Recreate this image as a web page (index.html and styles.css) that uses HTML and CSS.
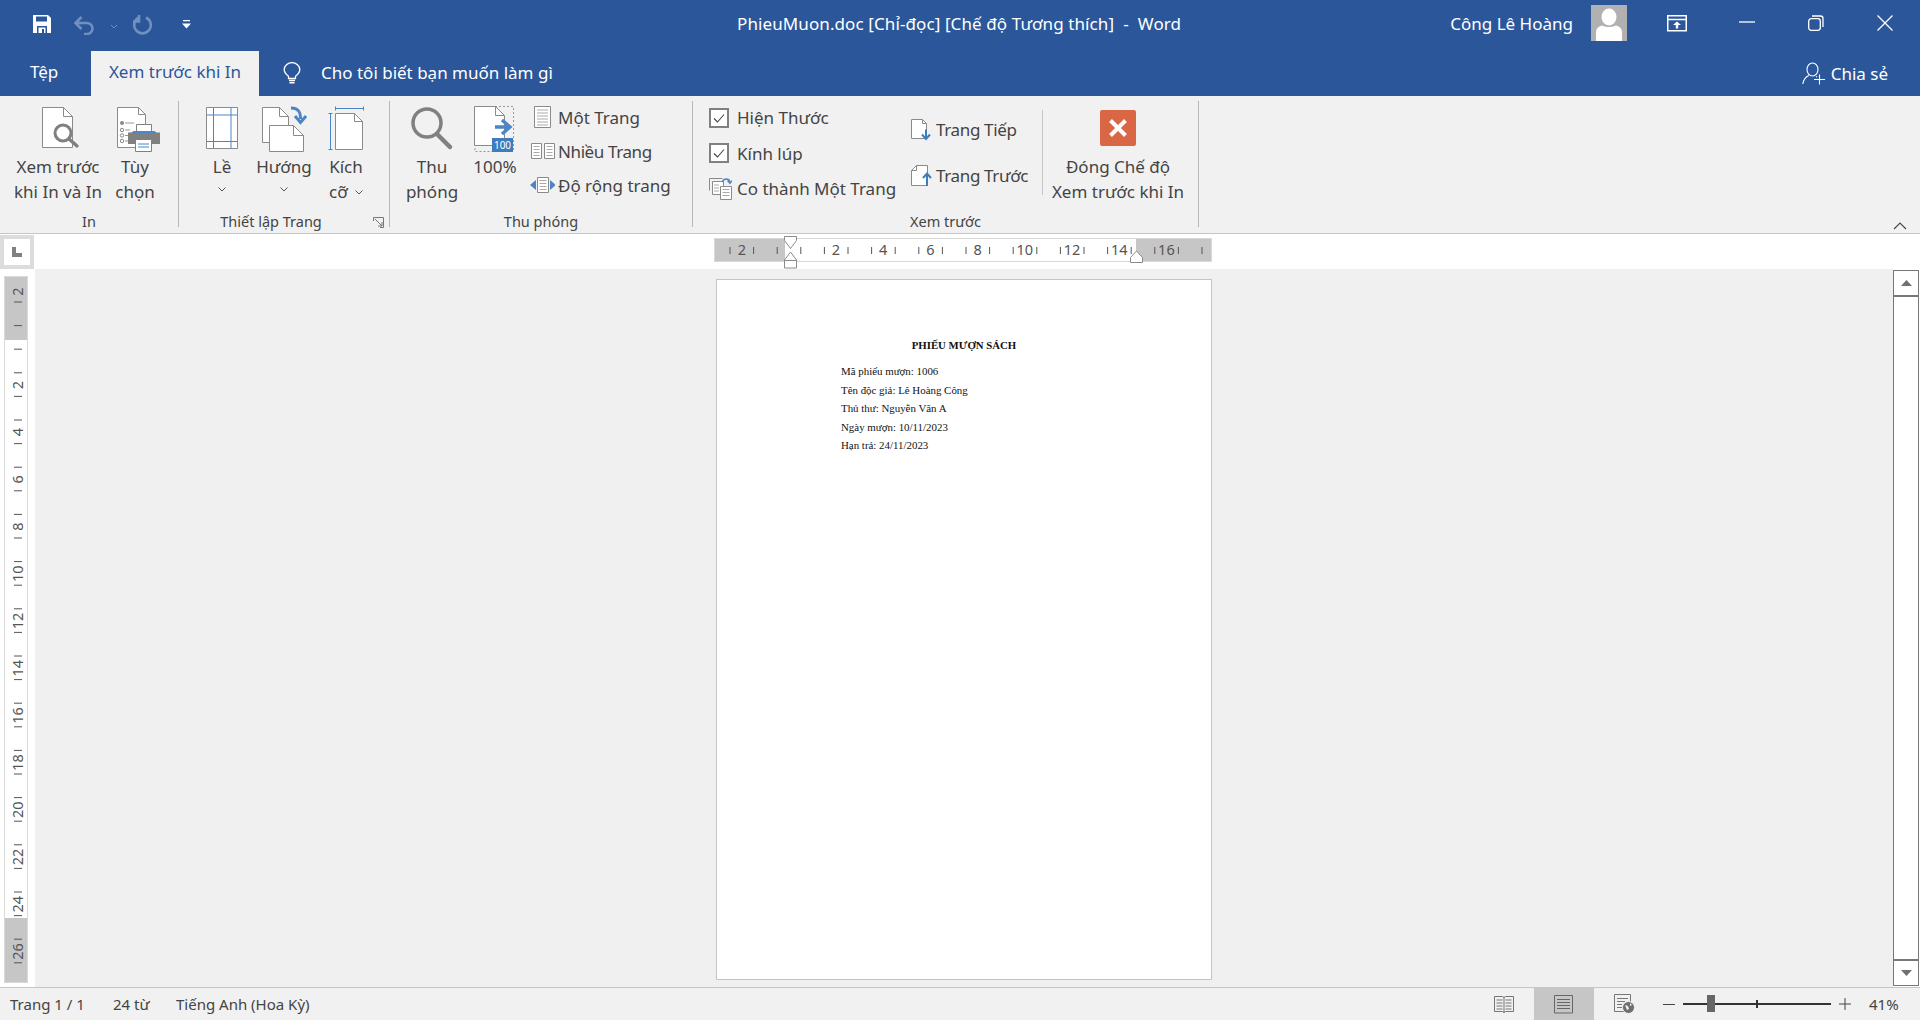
FILE: index.html
```html
<!DOCTYPE html>
<html lang="vi">
<head>
    <meta charset="UTF-8">
    <title>PhieuMuon.doc - Word</title>
    <link rel="stylesheet" href="styles.css">
</head>
<body>
    <div class="titlebar">
        <div class="qat">
            <svg class="qat-save" width="20" height="20" viewBox="0 0 20 20"><path d="M1 1h15l3 3v15H1z" fill="#fff"/><path d="M4 2.500h11v5H4z" fill="#2b579a"/><path d="M5 12h10v7H5z" fill="#2b579a"/><path d="M6.500 13.500h7V19h-7z" fill="#fff"/><path d="M10 15h2v4h-2z" fill="#2b579a"/></svg>
            <svg class="qat-undo" width="22" height="20" viewBox="0 0 22 20"><path d="M3 8h11a5.500 5.500 0 0 1 0 11h-3M8.500 2 2.500 8l6 6" fill="none" stroke="#6f90c0" stroke-width="2.600"/></svg>
            <svg class="qat-chev" width="8" height="5" viewBox="0 0 8 5"><path d="M1 1l3 3 3-3" fill="none" stroke="#6f90c0"/></svg>
            <svg class="qat-redo" width="21" height="21" viewBox="0 0 21 21"><path d="M14 3.500a8.300 8.300 0 1 1-7 0M7 1v6.500H1" fill="none" stroke="#6f90c0" stroke-width="2.600"/></svg>
            <svg class="qat-more" width="9" height="9" viewBox="0 0 9 9"><path d="M1 0h7v1.200H1zM0 3.500h9L4.500 8.500z" fill="#fff"/></svg>
        </div>
        <div class="doc-title">PhieuMuon.doc [Chỉ-đọc] [Chế độ Tương thích]&nbsp; -&nbsp; Word</div>
        <div class="win-area">
            <span class="user-name">Công Lê Hoàng</span>
            <svg class="avatar" width="36" height="36" viewBox="0 0 36 36"><rect width="36" height="36" fill="#b1b1b1"/><ellipse cx="18" cy="12" rx="7.500" ry="8.500" fill="#fff"/><path d="M5 36v-9q0-5 6-6.500 7 3 14 0 6 1.500 6 6.500v9z" fill="#fff"/></svg>
            <svg class="win-display" width="20" height="17" viewBox="0 0 20 17"><path d="M.750.750h18.500v15H.750zM1 4.500h18" fill="none" stroke="#fff" stroke-width="1.500"/><path d="M10 6.500l4 3.500h-2.800v3.500H8.800V10H6z" fill="#fff"/></svg>
            <svg class="win-min" width="16" height="2" viewBox="0 0 16 2"><path d="M0 1h16" stroke="#fff" stroke-width="1.300"/></svg>
            <svg class="win-restore" width="16" height="16" viewBox="0 0 16 16"><rect x=".7" y="3.700" width="11.600" height="11.600" rx="2.500" fill="none" stroke="#fff" stroke-width="1.300"/><path d="M4 1h8.500Q15 1 15 3.500V12" fill="none" stroke="#fff" stroke-width="1.300"/></svg>
            <svg class="win-close" width="16" height="16" viewBox="0 0 16 16"><path d="M.500.500l15 15M15.500.500l-15 15" stroke="#fff" stroke-width="1.300"/></svg>
        </div>
    </div>

    <div class="tabbar">
        <span class="tab tab-file">Tệp</span>
        <span class="tab tab-active">Xem trước khi In</span>
        <svg class="bulb" width="18" height="23" viewBox="0 0 18 23"><path d="M5.500 16.500v-2.200C3.500 12.800 1.200 11 1.200 7.600A7.800 7.000 0 0 1 16.800 7.600c0 3.400-2.300 5.200-4.300 6.700v2.200z" fill="none" stroke="#fff" stroke-width="1.300"/><path d="M6 18.500h6M6.500 20.800h5" stroke="#fff" stroke-width="1.500"/></svg>
        <span class="tell-me">Cho tôi biết bạn muốn làm gì</span>
        <span class="share">
            <svg width="23" height="23" viewBox="0 0 23 23"><ellipse cx="10.500" cy="7.500" rx="5.500" ry="6.500" fill="none" stroke="#fff" stroke-width="1.100"/><path d="M.800 22c1-5.500 3.500-7.500 6-8.500M14 14.500l1 .5" fill="none" stroke="#fff" stroke-width="1.100"/><path d="M17.500 12.500v10M12 17.500h11" stroke="#fff" stroke-width="1.100"/></svg>
            Chia sẻ
        </span>
    </div>

    <div class="ribbon">
        <div class="group group-print">
            <div class="group-body">
                <div class="big-btn w-preview">
                    <div class="big-icon icon-preview">
                        <svg width="44" height="44" viewBox="0 0 44 44"><path d="M2.500 1.500h21l9 9v31h-30z" fill="#fff" stroke="#8a8a8a"/><path d="M23.500 1.500v9h9" fill="none" stroke="#8a8a8a"/><circle cx="23" cy="27" r="8" fill="#fff" stroke="#808080" stroke-width="3"/><path d="M29 33l8 7" stroke="#808080" stroke-width="3.400" stroke-linecap="round"/></svg>
                    </div>
                    <div>Xem trước<br>khi In và In</div>
                </div>
                <div class="big-btn w-options">
                    <div class="big-icon icon-options">
                        <svg width="48" height="48" viewBox="0 0 48 48"><path d="M3.500 1.500h21l7 7v33h-28z" fill="#fff" stroke="#8a8a8a"/><path d="M24.500 1.500v7h7" fill="none" stroke="#8a8a8a"/><path d="M11 17h9M11 24h5M11 29.500h4M11 35h4" stroke="#999"/><circle cx="8" cy="17" r="2" fill="#888"/><circle cx="8" cy="24" r="1.700" fill="none" stroke="#888"/><circle cx="8" cy="29.500" r="1.700" fill="none" stroke="#888"/><circle cx="8" cy="35" r="1.700" fill="none" stroke="#888"/><path d="M22.500 18.500h15v9h-15z" fill="#fff" stroke="#808080"/><path d="M20 25h20l3 1.500h3v11.500h-32v-11.500h3z" fill="#808080"/><path d="M19 26.500h22" stroke="#4a86c5" stroke-width="2"/><path d="M21.500 33.500h16v12h-16z" fill="#fff" stroke="#808080"/><path d="M24 38h11M24 41h11" stroke="#4a86c5"/></svg>
                    </div>
                    <div>Tùy<br>chọn</div>
                </div>
            </div>
            <div class="group-label">In</div>
        </div>

        <div class="group group-setup">
            <div class="group-body">
                <div class="big-btn w-setup">
                    <div class="big-icon">
                        <svg width="34" height="44" viewBox="0 0 34 44"><path d="M1.500 1.500h31v41h-31z" fill="#fff" stroke="#8a8a8a"/><path d="M8.500 2v40M26 2v40M2 9h30M2 35.500h30" stroke="#4a86c5"/></svg>
                    </div>
                    <div>Lề</div>
                    <svg class="chev" width="8" height="5" viewBox="0 0 8 5"><path d="M.500.500L4 4 7.500.500" fill="none" stroke="#555"/></svg>
                </div>
                <div class="big-btn w-setup">
                    <div class="big-icon">
                        <svg width="46" height="46" viewBox="0 0 46 46"><path d="M1.500 1.500h17l9 9v26h-26z" fill="#fff" stroke="#8a8a8a"/><path d="M18.500 1.500v9h9" fill="none" stroke="#8a8a8a"/><path d="M8.500 19.500h24l10 10v16h-34z" fill="#fff" stroke="#8a8a8a"/><path d="M32.500 19.500v10h10" fill="none" stroke="#8a8a8a"/><path d="M30 2c7 0 10 4 9.500 11M34 10l5.500 6.500 5.500-6.500" fill="none" stroke="#4a86c5" stroke-width="3"/></svg>
                    </div>
                    <div>Hướng</div>
                    <svg class="chev" width="8" height="5" viewBox="0 0 8 5"><path d="M.500.500L4 4 7.500.500" fill="none" stroke="#555"/></svg>
                </div>
                <div class="big-btn w-setup">
                    <div class="big-icon">
                        <svg width="36" height="46" viewBox="0 0 36 46"><path d="M7.500 7.500h19l8 8v28h-27z" fill="#fff" stroke="#8a8a8a"/><path d="M26.500 7.500v8h8" fill="none" stroke="#8a8a8a"/><path d="M7.500.500v4M35.500.500v4M7.500 2.500h28M.500 7.500h4M.500 43.500h4M2.500 7.500v36" fill="none" stroke="#4a86c5"/></svg>
                    </div>
                    <div>Kích<br>cỡ <svg class="chev-inline" width="8" height="5" viewBox="0 0 8 5"><path d="M.500.500L4 4 7.500.500" fill="none" stroke="#555"/></svg></div>
                </div>
            </div>
            <div class="group-label label-launcher">
                Thiết lập Trang
                <svg class="launcher" width="11" height="11" viewBox="0 0 11 11"><path d="M.500 4V.500H10.500V10.500H7M2 2l7 7M5 9h4V5" fill="none" stroke="#777"/></svg>
            </div>
        </div>

        <div class="group group-zoom">
            <div class="group-body">
                <div class="big-btn w-zoom">
                    <div class="big-icon">
                        <svg width="44" height="46" viewBox="0 0 44 46"><circle cx="17" cy="17" r="14" fill="none" stroke="#808080" stroke-width="3.500"/><path d="M27 28l13 13" stroke="#808080" stroke-width="4.500" stroke-linecap="round"/></svg>
                    </div>
                    <div>Thu<br>phóng</div>
                </div>
                <div class="big-btn w-hundred">
                    <div class="big-icon">
                        <svg width="42" height="48" viewBox="0 0 42 48"><path d="M21 .500h18.500v45H26" fill="none" stroke="#999" stroke-dasharray="2 2"/><path d="M.500.500h21l9 9v30h-30z" fill="#fff" stroke="#8a8a8a"/><path d="M21.500.500v9h9" fill="none" stroke="#8a8a8a"/><path d="M1 42v3.500h18" fill="none" stroke="#999" stroke-dasharray="2 2"/><path d="M21 21h13M28 14l8 7-8 7" fill="none" stroke="#4a86c5" stroke-width="3.400"/><rect x="18" y="32" width="21" height="14" fill="#3f7cbc"/><text class="badge" x="28.500" y="42.500">100</text></svg>
                    </div>
                    <div>100%</div>
                </div>
                <div class="small-col">
                    <div class="small-row">
                        <div class="small-icon"><svg width="32" height="24" viewBox="0 0 32 24"><path d="M11.500 1.500h16v21h-16z" fill="#fff" stroke="#8a8a8a"/><path d="M14 5h11M14 8h11M14 11h11M14 14h11M14 17h11M14 20h11" stroke="#aaa"/></svg></div>
                        Một Trang
                    </div>
                    <div class="small-row">
                        <div class="small-icon"><svg width="32" height="18" viewBox="0 0 32 18"><path d="M8.500 1.500h10v15h-10zM21.500 1.500h10v15h-10z" fill="#fff" stroke="#8a8a8a"/><path d="M10.500 4.500h6M10.500 7.500h6M10.500 10.500h6M10.500 13.500h6M23.500 4.500h6M23.500 7.500h6M23.500 10.500h6M23.500 13.500h6" stroke="#aaa"/></svg></div>
                        <span class="tight">Nhiều Trang</span>
                    </div>
                    <div class="small-row">
                        <div class="small-icon"><svg width="32" height="18" viewBox="0 0 32 18"><path d="M14.500 1.500h11v15h-11z" fill="#fff" stroke="#8a8a8a"/><path d="M16.500 4.500h7M16.500 7.500h7M16.500 10.500h7M16.500 13.500h7" stroke="#aaa"/><path d="M13 4v10l-6-5zM27 4v10l6-5z" fill="#4a86c5"/></svg></div>
                        Độ rộng trang
                    </div>
                </div>
            </div>
            <div class="group-label">Thu phóng</div>
        </div>

        <div class="group group-preview">
            <div class="group-body">
                <div class="check-col">
                    <div class="check-row">
                        <svg class="check-icon" width="20" height="20" viewBox="0 0 20 20"><rect x="1" y="1" width="18" height="18" fill="#fff" stroke="#808080" stroke-width="2"/><path d="M5 10.500l3.500 3.500 6.500-7.500" fill="none" stroke="#444" stroke-width="1.100"/></svg>
                        Hiện Thước
                    </div>
                    <div class="check-row">
                        <svg class="check-icon" width="20" height="20" viewBox="0 0 20 20"><rect x="1" y="1" width="18" height="18" fill="#fff" stroke="#808080" stroke-width="2"/><path d="M5 10.500l3.500 3.500 6.500-7.500" fill="none" stroke="#444" stroke-width="1.100"/></svg>
                        Kính lúp
                    </div>
                    <div class="check-row">
                        <svg class="check-icon fit-icon" width="23" height="23" viewBox="0 0 23 23"><path d="M.500 1.500h13M.500 1.500v12M3.500 4.500h11v13h-11z" fill="#fff" stroke="#8a8a8a"/><path d="M11.500 9.500h11v13h-11z" fill="#fff" stroke="#8a8a8a"/><path d="M5 8h5M5 11h5M5 14h5M13.500 12.500h7M13.500 15.500h7M13.500 18.500h7" stroke="#aaa"/><path d="M13 5c2-4 7-4 8 0M18.500 3.500l2.500 3 2-3" fill="none" stroke="#4a86c5" stroke-width="1.300"/></svg>
                        Co thành Một Trang
                    </div>
                </div>
                <div class="nav-col">
                    <div class="nav-row">
                        <svg class="nav-icon" width="22" height="23" viewBox="0 0 22 23"><path d="M1.500 1.500h11l4 4v15h-15z" fill="#fff" stroke="#8a8a8a"/><path d="M12.500 1.500v4h4" fill="none" stroke="#8a8a8a"/><path d="M16 11.500v9M12 16.500l4 4.500 4-4.500" fill="none" stroke="#3f7cbc" stroke-width="2"/></svg>
                        Trang Tiếp
                    </div>
                    <div class="nav-row">
                        <svg class="nav-icon" width="22" height="23" viewBox="0 0 22 23"><path d="M1.500 6.500l5-5h11v20h-16z" fill="#fff" stroke="#8a8a8a"/><path d="M6.500 1.500v5h-5" fill="none" stroke="#8a8a8a"/><path d="M17 22v-12M13 14l4-4.500 4 4.500" fill="none" stroke="#3f7cbc" stroke-width="2"/></svg>
                        Trang Trước
                    </div>
                </div>
                <div class="inner-sep"></div>
                <div class="big-btn w-close">
                    <div class="big-icon close-icon">
                        <svg width="36" height="36" viewBox="0 0 36 36"><rect width="36" height="36" rx="2" fill="#d96644"/><path d="M10.500 10.500l15 15M25.500 10.500l-15 15" stroke="#fff" stroke-width="4"/></svg>
                    </div>
                    <div>Đóng Chế độ<br>Xem trước khi In</div>
                </div>
            </div>
            <div class="group-label">Xem trước</div>
        </div>

        <svg class="collapse" width="14" height="8" viewBox="0 0 14 8"><path d="M1 7l6-6 6 6" fill="none" stroke="#444" stroke-width="1.100"/></svg>
    </div>

    <div class="ruler-row">
        <div class="tab-stop">
            <div class="tab-stop-box"><svg width="12" height="12" viewBox="0 0 12 12"><path d="M1 1h4v6h6v4H1z" fill="#808080"/></svg></div>
        </div>
        <svg class="h-ruler" width="500" height="36" viewBox="0 0 500 36">
            <rect x=".5" y="5.500" width="497" height="23" fill="#fff" stroke="#d9d9d9"/>
            <rect x="1" y="6" width="70" height="22" fill="#c6c6c6"/>
            <rect x="422" y="6" width="75" height="22" fill="#c6c6c6"/>
            <path class="tick" d="M16 14v7M39.600 14v7M63.200 14v7M86.800 14v7M110.400 14v7M134 14v7M157.600 14v7M181.200 14v7M204.800 14v7M228.400 14v7M252 14v7M275.600 14v7M299.200 14v7M322.800 14v7M346.400 14v7M370 14v7M393.600 14v7M417.200 14v7M440.800 14v7M464.400 14v7M488 14v7"/>
            <text class="ruler-num" x="27.800" y="22">2</text>
            <text class="ruler-num" x="122" y="22">2</text>
            <text class="ruler-num" x="169.200" y="22">4</text>
            <text class="ruler-num" x="216.400" y="22">6</text>
            <text class="ruler-num" x="263.600" y="22">8</text>
            <text class="ruler-num" x="310.800" y="22">10</text>
            <text class="ruler-num" x="358" y="22">12</text>
            <text class="ruler-num" x="405.200" y="22">14</text>
            <text class="ruler-num" x="452.400" y="22">16</text>
            <path class="marker" d="M70.500 3.500h12v4L76.500 15.500 70.500 7.500zM76.500 19l6 8v8h-12v-8z"/>
            <path class="marker" d="M70.500 27.500h12"/>
            <path class="marker" d="M416.500 29.500v-5l6-6.500 6 6.500v5z"/>
        </svg>
    </div>

    <div class="doc-area">
        <svg class="v-ruler" width="35" height="718" viewBox="0 0 35 718">
            <rect x="4.500" y="7.500" width="23" height="706" fill="#fff" stroke="#d9d9d9"/>
            <rect x="5" y="8" width="22" height="63" fill="#c6c6c6"/>
            <rect x="5" y="649" width="22" height="64" fill="#c6c6c6"/>
            <path class="tick" d="M14 33h8M14 56.600h8M14 80.200h8M14 103.800h8M14 127.400h8M14 151h8M14 174.600h8M14 198.200h8M14 221.800h8M14 245.400h8M14 269h8M14 292.600h8M14 316.200h8M14 339.800h8M14 363.400h8M14 387h8M14 410.600h8M14 434.200h8M14 457.800h8M14 481.400h8M14 505h8M14 528.600h8M14 552.200h8M14 575.800h8M14 599.400h8M14 623h8M14 646.600h8M14 670.200h8M14 693.800h8"/>
            <text class="ruler-num" transform="translate(22.500 22.500) rotate(-90)">2</text>
            <text class="ruler-num" transform="translate(22.500 116) rotate(-90)">2</text>
            <text class="ruler-num" transform="translate(22.500 163.200) rotate(-90)">4</text>
            <text class="ruler-num" transform="translate(22.500 210.400) rotate(-90)">6</text>
            <text class="ruler-num" transform="translate(22.500 257.600) rotate(-90)">8</text>
            <text class="ruler-num" transform="translate(22.500 304.800) rotate(-90)">10</text>
            <text class="ruler-num" transform="translate(22.500 352) rotate(-90)">12</text>
            <text class="ruler-num" transform="translate(22.500 399.200) rotate(-90)">14</text>
            <text class="ruler-num" transform="translate(22.500 446.400) rotate(-90)">16</text>
            <text class="ruler-num" transform="translate(22.500 493.600) rotate(-90)">18</text>
            <text class="ruler-num" transform="translate(22.500 540.800) rotate(-90)">20</text>
            <text class="ruler-num" transform="translate(22.500 588) rotate(-90)">22</text>
            <text class="ruler-num" transform="translate(22.500 635.200) rotate(-90)">24</text>
            <text class="ruler-num" transform="translate(22.500 682.400) rotate(-90)">26</text>
        </svg>
        <div class="workspace">
            <div class="page">
                <div class="page-title">PHIẾU MƯỢN SÁCH</div>
                <div class="page-line">Mã phiếu mượn: 1006</div>
                <div class="page-line">Tên độc giả: Lê Hoàng Công</div>
                <div class="page-line">Thủ thư: Nguyễn Văn A</div>
                <div class="page-line">Ngày mượn: 10/11/2023</div>
                <div class="page-line">Hạn trả: 24/11/2023</div>
            </div>
        </div>
        <div class="scrollbar">
            <div class="scroll-btn"><svg width="11" height="6" viewBox="0 0 11 6"><path d="M5.500 0L11 6H0z" fill="#707070"/></svg></div>
            <div class="scroll-track"></div>
            <div class="scroll-btn scroll-btn-down"><svg width="11" height="6" viewBox="0 0 11 6"><path d="M0 0h11L5.500 6z" fill="#707070"/></svg></div>
        </div>
    </div>

    <div class="statusbar">
        <span class="st-page">Trang 1 / 1</span>
        <span class="st-words">24 từ</span>
        <span class="st-lang">Tiếng Anh (Hoa Kỳ)</span>
        <div class="st-right">
            <span class="view-btn">
                <svg width="20" height="19" viewBox="0 0 20 19"><path d="M.500 1.500h8l1.500 1 1.500-1h8v15h-8l-1.500 1-1.500-1h-8z" fill="none" stroke="#777"/><path d="M10 2v16M2.500 5h6M2.500 8h6M2.500 11h6M2.500 14h6M11.500 5h6M11.500 8h6M11.500 11h6M11.500 14h6" stroke="#777"/></svg>
            </span>
            <span class="view-btn view-active">
                <svg width="20" height="19" viewBox="0 0 20 19"><path d="M.500.500h18v17.500h-18z" fill="none" stroke="#666"/><path d="M3 4.500h13M3 7.500h13M3 10.500h13M3 13.500h13" stroke="#666"/></svg>
            </span>
            <span class="view-btn">
                <svg width="21" height="20" viewBox="0 0 21 20"><path d="M.500.500h16v17h-16z" fill="none" stroke="#777"/><path d="M3 4.500h11M3 7.500h8M3 10.500h5M3 13.500h5" stroke="#777"/><circle cx="14.500" cy="13.500" r="6" fill="#6f6f6f" stroke="#f1f1f1"/><path d="M11 11l3 1 1 3-2 1zM16 9l2 2-2 1z" fill="#f1f1f1"/></svg>
            </span>
            <span class="zoom-minus"></span>
            <div class="zoom-slider">
                <span class="zoom-mid"></span>
                <span class="zoom-thumb"></span>
            </div>
            <svg class="zoom-plus" width="12" height="12" viewBox="0 0 12 12"><path d="M0 6h12M6 0v12" stroke="#444"/></svg>
            <span class="zoom-pct">41%</span>
        </div>
    </div>
</body>
</html>
```

FILE: styles.css
```css
html, body {
    margin: 0;
    height: 1020px;
    overflow: hidden;
}

body {
    font-family: "Noto Sans", "Open Sans", sans-serif;
    font-size: 17px;
    color: #444;
    background-color: #f1f1f1;
}

svg {
    display: block;
    flex: none;
}

/* title bar */
.titlebar {
    display: flex;
    align-items: center;
    height: 50px;
    background-color: #2b579a;
    color: #fff;
}

.qat {
    display: flex;
    align-items: center;
    width: 737px;
    height: 50px;
    padding-left: 32px;
    box-sizing: border-box;
}

.qat-save { margin-top: -2px; }
.qat-undo { margin-left: 21px; margin-top: -1px; }
.qat-chev { margin-left: 15px; margin-top: 2px; }
.qat-redo { margin-left: 14px; margin-top: -1px; }
.qat-more { margin-left: 29px; margin-top: -1px; }

.doc-title {
    flex: 1;
    margin-top: -4px;
    letter-spacing: 0.1px;
    white-space: nowrap;
}

.win-area {
    display: flex;
    align-items: center;
    margin-right: 27px;
}

.user-name { margin-top: -3px; margin-right: 18px; }
.avatar { margin-top: -4px; margin-right: 40px; }
.win-display { margin-top: -4px; margin-right: 52px; }
.win-min { margin-top: -6px; margin-right: 53px; }
.win-restore { margin-top: -4px; margin-right: 53px; }
.win-close { margin-top: -4px; }

/* tabs */
.tabbar {
    display: flex;
    align-items: center;
    height: 46px;
    background-color: #2b579a;
    color: #fff;
}

.tab {
    display: flex;
    align-items: center;
    height: 41px;
    padding-bottom: 4px;
    margin-top: 1px;
}

.tab-file {
    width: 91px;
    padding-left: 30px;
    box-sizing: border-box;
    height: 45px;
}

.tab-active {
    width: 168px;
    justify-content: center;
    background-color: #f1f1f1;
    color: #2b579a;
}

.bulb { margin-left: 24px; }

.tell-me {
    flex: 1;
    margin-left: 20px;
    margin-top: -2px;
}

.share {
    display: flex;
    align-items: center;
    gap: 6px;
    margin-right: 32px;
}

/* ribbon */
.ribbon {
    position: relative;
    display: flex;
    height: 138px;
    box-sizing: border-box;
    border-bottom: 1px solid #c6c6c6;
}

.group {
    display: flex;
    flex-direction: column;
    box-sizing: border-box;
    margin-top: 5px;
    height: 126px;
    border-right: 1px solid #b8b8b8;
}

.group-print { width: 179px; padding-left: 8px; }
.group-setup { width: 211px; padding-left: 12px; }
.group-zoom { width: 303px; padding-left: 7px; }
.group-preview { width: 506px; }

.group-body {
    display: flex;
    flex: 1;
    margin-top: 5px;
}

.group-label {
    display: flex;
    align-items: center;
    justify-content: center;
    height: 24px;
    margin-bottom: -6px;
    line-height: 24px;
    font-size: 14.500px;
}

.group-print .group-label { margin-left: -8px; }
.group-setup .group-label { margin-left: -12px; }
.group-zoom .group-label { margin-left: -7px; }

.label-launcher {
    position: relative;
    padding-right: 26px;
}

.launcher {
    position: absolute;
    right: 5px;
    top: 8px;
}

.big-btn {
    display: flex;
    flex-direction: column;
    align-items: center;
    text-align: center;
    line-height: 25px;
    white-space: nowrap;
}

.big-icon {
    display: flex;
    justify-content: center;
    height: 48px;
}

.icon-preview { padding-left: 8px; }
.icon-options { padding-left: 6px; }

.w-preview { width: 100px; }
.w-options { width: 54px; }
.w-setup { width: 62px; }
.w-zoom { width: 70px; }
.w-hundred { width: 56px; }
.w-close { width: 150px; }

.close-icon { padding-top: 4px; height: 44px; }

.chev { margin-top: 8px; }

.chev-inline {
    display: inline-block;
    vertical-align: 3px;
    margin-left: 3px;
}

.small-col {
    display: flex;
    flex-direction: column;
    margin-top: -6px;
}

.small-row {
    display: flex;
    align-items: center;
    height: 34px;
    white-space: nowrap;
}

.small-icon {
    display: flex;
    align-items: center;
    width: 35px;
}

.tight { letter-spacing: -0.4px; }

.check-col {
    display: flex;
    flex-direction: column;
    margin-top: -6px;
    padding-left: 16px;
    width: 200px;
    box-sizing: border-box;
}

.check-row {
    display: flex;
    align-items: center;
    height: 35.500px;
    white-space: nowrap;
}

.check-icon {
    margin-right: 8px;
}

.fit-icon { margin-right: 5px; }

.nav-col {
    display: flex;
    flex-direction: column;
    margin-left: 17px;
    width: 132px;
    letter-spacing: -0.35px;
}

.nav-row {
    display: flex;
    align-items: center;
    height: 46px;
    white-space: nowrap;
}

.nav-icon { margin-right: 4px; }

.inner-sep {
    width: 1px;
    height: 85px;
    margin-top: 4px;
    background-color: #c6c6c6;
}

.collapse {
    position: absolute;
    right: 13px;
    bottom: 3px;
}

/* rulers */
.ruler-row {
    display: flex;
    height: 35px;
    background-color: #fff;
}

.tab-stop {
    width: 35px;
    height: 35px;
    margin-right: 679px;
    padding: 1px 0 0;
    box-sizing: border-box;
}

.tab-stop-box {
    display: flex;
    align-items: center;
    justify-content: center;
    width: 26px;
    height: 26px;
    border: 4px solid #dcdcdc;
}

.h-ruler { margin-top: -1px; }

.tick {
    fill: none;
    stroke: #555;
    stroke-width: 1;
}

.ruler-num {
    font-size: 14.500px;
    fill: #555;
    text-anchor: middle;
}

.badge {
    font-size: 10px;
    fill: #fff;
    text-anchor: middle;
}

.marker {
    fill: #fff;
    stroke: #8a8a8a;
    stroke-width: 1;
}

/* document */
.doc-area {
    display: flex;
    height: 718px;
    background-color: #fff;
}

.workspace {
    flex: 1;
    background-color: #f0f0f0;
    padding: 10px 0 0 681px;
}

.page {
    width: 496px;
    height: 701px;
    box-sizing: border-box;
    padding: 58px 0 0 124px;
    background-color: #fff;
    border: 1px solid #c4c4c4;
    font-family: "Liberation Serif", serif;
    color: #111;
}

.page-title {
    width: 246px;
    margin-bottom: 10px;
    text-align: center;
    font-size: 10.800px;
    font-weight: bold;
    line-height: 14px;
}

.page-line {
    height: 18.500px;
    font-size: 10.900px;
    line-height: 18.500px;
    white-space: nowrap;
}

.scrollbar {
    display: flex;
    flex-direction: column;
    width: 26px;
    box-sizing: border-box;
    margin-right: 1px;
    margin-top: 1px;
    margin-bottom: 1px;
    background-color: #fff;
    border: 1px solid #777;
}

.scroll-btn {
    display: flex;
    align-items: center;
    justify-content: center;
    height: 24px;
    border-bottom: 2px solid #777;
}

.scroll-track { flex: 1; }

.scroll-btn-down {
    border-bottom: 0;
    border-top: 2px solid #777;
}

/* status bar */
.statusbar {
    display: flex;
    align-items: center;
    height: 33px;
    box-sizing: border-box;
    border-top: 1px solid #c6c6c6;
    background-color: #f1f1f1;
    font-size: 15px;
}

.st-page { width: 113px; padding-left: 10px; box-sizing: border-box; }
.st-words { width: 63px; }
.st-lang { flex: 1; }

.st-right {
    display: flex;
    align-items: center;
    height: 32px;
}

.view-btn {
    display: flex;
    align-items: center;
    justify-content: center;
    width: 60px;
    height: 32px;
}

.view-active { background-color: #c6c6c6; }

.zoom-minus {
    width: 12px;
    height: 1px;
    margin-left: 9px;
    background-color: #444;
}

.zoom-slider {
    position: relative;
    width: 148px;
    height: 2px;
    margin-left: 8px;
    background-color: #333;
}

.zoom-mid {
    position: absolute;
    left: 73px;
    top: -3px;
    width: 2px;
    height: 8px;
    background-color: #333;
}

.zoom-thumb {
    position: absolute;
    left: 24px;
    top: -8px;
    width: 8px;
    height: 17px;
    background-color: #666;
}

.zoom-plus { margin-left: 8px; }

.zoom-pct {
    width: 69px;
    box-sizing: border-box;
    padding-left: 18px;
}
```
